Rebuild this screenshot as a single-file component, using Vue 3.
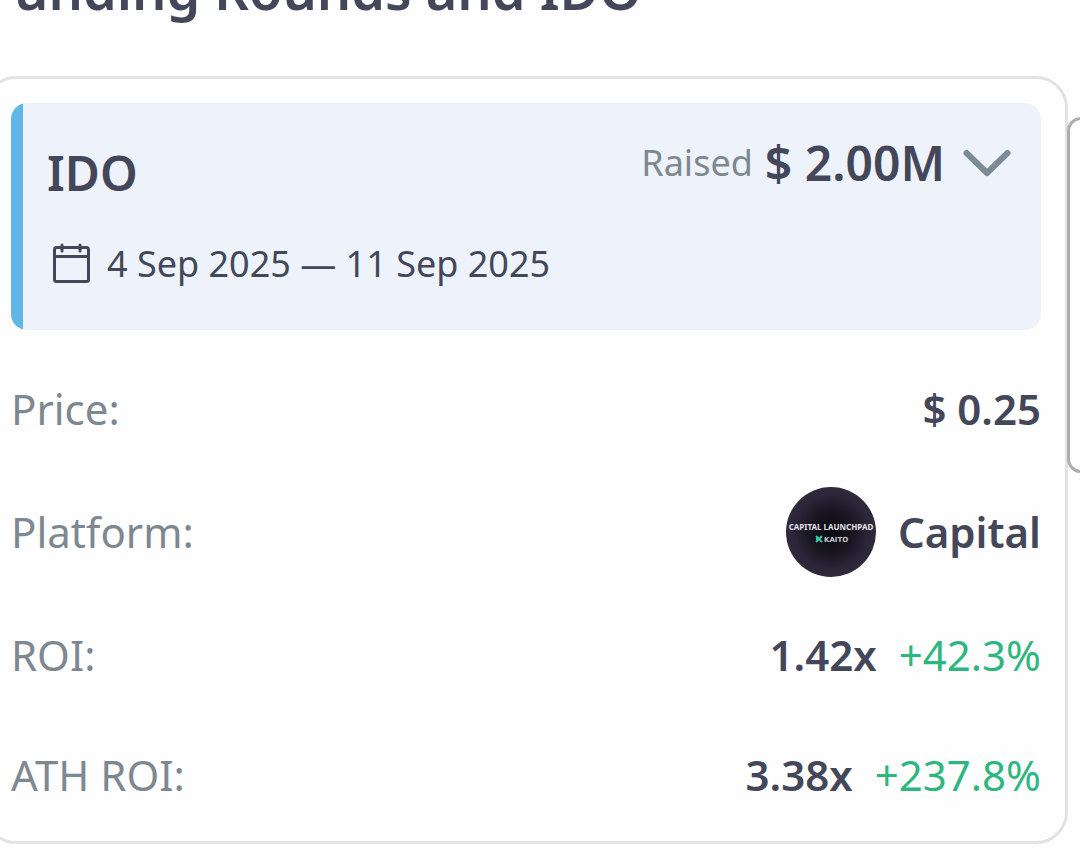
<script setup>
import { ref } from 'vue'

const open = ref(true)
const rows = [
  { label: 'Price:', value: '$ 0.25' },
  { label: 'Platform:', value: 'Capital', logo: true },
  { label: 'ROI:', value: '1.42x', change: '+42.3%' },
  { label: 'ATH ROI:', value: '3.38x', change: '+237.8%' },
]
</script>

<template>
  <main class="page">
    <h2 class="heading">Funding Rounds and IDO</h2>

    <section class="card">
      <header class="round">
        <div class="round-info">
          <h3 class="round-title">IDO</h3>
          <p class="dates">
            <svg class="calendar" viewBox="0 0 40 42" aria-hidden="true">
              <rect x="3.500" y="4.500" width="34" height="34" rx="2" />
              <path d="M3.500 13.500H37.500M11 2V8M29 2V8" />
            </svg>
            <span>4 Sep 2025 — 11 Sep 2025</span>
          </p>
        </div>
        <div class="raised">
          <span class="raised-label">Raised</span>
          <strong class="raised-value">$ 2.00M</strong>
          <button class="toggle" type="button" aria-label="Toggle round details" :aria-expanded="open" @click="open = !open">
            <svg class="chevron" viewBox="0 0 48 30" aria-hidden="true">
              <path d="M3.500 5L24 25L44.500 5" />
            </svg>
          </button>
        </div>
      </header>

      <dl v-if="open" class="rows">
        <div v-for="row in rows" :key="row.label" class="row">
          <dt class="label">{{ row.label }}</dt>
          <dd class="value">
            <svg v-if="row.logo" class="logo" viewBox="0 0 90 90" aria-hidden="true">
              <defs>
                <radialGradient id="glow">
                  <stop offset="0" stop-color="#09080d" />
                  <stop offset="0.5" stop-color="#1a1723" />
                  <stop offset="0.8" stop-color="#2a2436" />
                  <stop offset="1" stop-color="#302a3d" />
                </radialGradient>
              </defs>
              <circle cx="45" cy="45" r="45" fill="url(#glow)" />
              <text class="logo-name" x="45" y="43" text-anchor="middle">CAPITAL LAUNCHPAD</text>
              <path class="logo-mark" d="M30 49L36 55M36 49L30 55M30 52H33" />
              <text class="logo-brand" x="38" y="55">KAITO</text>
            </svg>
            <strong class="amount">{{ row.value }}</strong>
            <span v-if="row.change" class="change">{{ row.change }}</span>
          </dd>
        </div>
      </dl>
    </section>

    <div class="side-handle"></div>
  </main>
</template>

<style>
body {
  background: #fefefe;
}
</style>

<style scoped>
.page {
  position: relative;
  overflow: hidden;
  padding-bottom: 16px;
  font-family: "Noto Sans", sans-serif;
  color: #434759;
}

.heading {
  margin: -43px 0 0 -15px;
  font-size: 54px;
  line-height: 64px;
  font-weight: 600;
  white-space: nowrap;
}

.card {
  margin: 55px 12px 0 -16px;
  padding: 24px;
  border: 3px solid #e0e4e5;
  border-radius: 32px;
}

.round {
  display: flex;
  justify-content: space-between;
  align-items: flex-start;
  padding: 25px 30px 42px 36px;
  border-radius: 16px;
  background: linear-gradient(to right, #60b6e6 12px, #eef3fb 12px);
}

.round-title {
  margin: 0;
  font-size: 48px;
  line-height: 90px;
  font-weight: 600;
}

.dates {
  display: flex;
  align-items: center;
  gap: 16px;
  margin: 22px 0 0;
  padding-left: 4px;
  font-size: 36px;
  line-height: 48px;
}

.calendar {
  width: 40px;
  height: 42px;
  fill: none;
  stroke: #434759;
  stroke-width: 3;
  stroke-linecap: round;
}

.raised {
  display: flex;
  align-items: center;
  line-height: 70px;
}

.raised-label {
  margin-right: 12px;
  font-size: 36px;
  color: #7d8890;
}

.raised-value {
  margin-right: 18px;
  font-size: 48px;
  font-weight: 600;
}

.toggle {
  display: flex;
  padding: 0;
  border: 0;
  background: none;
  cursor: pointer;
}

.chevron {
  width: 48px;
  height: 30px;
  fill: none;
  stroke: #7c8b96;
  stroke-width: 6;
  stroke-linecap: round;
  stroke-linejoin: round;
}

.rows {
  display: flex;
  flex-direction: column;
  gap: 36px;
  margin: 37px 0 0;
  font-size: 42px;
  line-height: 84px;
}

.row {
  display: flex;
  justify-content: space-between;
  align-items: center;
}

.label {
  color: #7d8890;
}

.value {
  display: flex;
  align-items: center;
  gap: 22px;
  margin: 0;
}

.amount {
  font-weight: 600;
}

.change {
  color: #2eb67f;
}

.logo {
  width: 90px;
  height: 90px;
}

.logo-name {
  font-size: 8px;
  font-weight: 700;
  fill: #e4e2e8;
}

.logo-mark {
  fill: none;
  stroke: #35c9a0;
  stroke-width: 2;
}

.logo-brand {
  font-family: "DejaVu Sans", sans-serif;
  font-size: 7px;
  font-weight: 700;
  fill: #c8c6ce;
}

.side-handle {
  position: absolute;
  top: 117px;
  right: -20px;
  width: 27px;
  height: 350px;
  border: 3px solid #acaeae;
  border-radius: 14px;
}
</style>
